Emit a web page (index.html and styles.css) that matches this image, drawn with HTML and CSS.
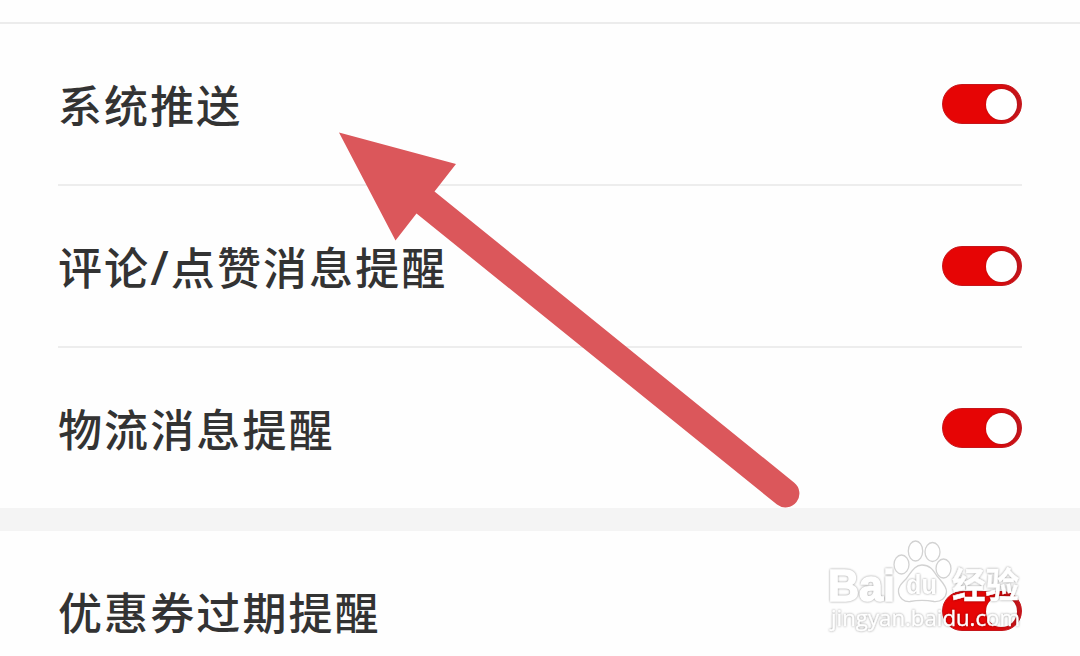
FILE: index.html
```html
<!DOCTYPE html>
<html lang="zh-CN">
<head>
<meta charset="UTF-8" />
<meta name="viewport" content="width=device-width, initial-scale=1.0" />
<title>消息推送设置</title>
<link rel="stylesheet" href="styles.css">
</head>
<body>
<div class="page">
  <header class="topbar"></header>

  <section class="group">
    <div class="row">
      <span class="label">系统推送</span>
      <span class="switch" role="switch" aria-checked="true"></span>
    </div>
    <div class="row">
      <span class="label">评论<span class="slash">/</span>点赞消息提醒</span>
      <span class="switch" role="switch" aria-checked="true"></span>
    </div>
    <div class="row">
      <span class="label">物流消息提醒</span>
      <span class="switch" role="switch" aria-checked="true"></span>
    </div>
  </section>

  <section class="group">
    <div class="row">
      <span class="label">优惠券过期提醒</span>
      <span class="switch" role="switch" aria-checked="true"></span>
    </div>
  </section>

  <!-- Pointer arrow -->
  <svg class="arrow" viewBox="0 0 1080 656">
    <path d="M339 132.5 L456 164 L434.500 191.500 L794 482.500 A13.900 13.900 0 0 1 777 504.500 L416.500 213.500 L395.500 240.500 Z" />
  </svg>

  <!-- Watermark -->
  <svg class="watermark" viewBox="820 530 210 110">
    <text class="wm-latin" x="828" y="601" textLength="67" lengthAdjust="spacingAndGlyphs">Bai</text>
    <g class="wm-paw">
      <ellipse cx="901.500" cy="564.500" rx="7.500" ry="9.500" />
      <ellipse cx="915.500" cy="551" rx="7.200" ry="10" />
      <ellipse cx="932.500" cy="552" rx="7.500" ry="9.500" />
      <ellipse cx="943.500" cy="568.500" rx="7.500" ry="9.500" />
      <path d="M922 565 C914 565 911 573 906 579 C901 584 898 587 898.500 592 C899 598 904 602 910 601.500 C918 600 926 600 934 601.500 C941 602 946 598 946.500 592 C947 586 941 581 937 576 C933 570 930 565 922 565 Z" />
    </g>
    <text class="wm-du" x="906" y="594" textLength="31" lengthAdjust="spacingAndGlyphs">du</text>
    <text class="wm-cjk" x="952" y="598" textLength="67" lengthAdjust="spacingAndGlyphs">经验</text>
    <text class="wm-url" x="831" y="626" textLength="189" lengthAdjust="spacingAndGlyphs">jingyan.baidu.com</text>
  </svg>
</div>
</body>
</html>
```
FILE: styles.css
```css
* { box-sizing: border-box; }
body { margin: 0; background: #fefefe; color: #333; font-family: "Noto Sans CJK SC", sans-serif; overflow: hidden; }
.page { position: relative; width: 1080px; height: 656px; overflow: hidden; }
.topbar { height: 24px; border-bottom: 2px solid #ececec; }
.group { padding: 0 58px; }
.group + .group { border-top: 23px solid #f4f4f4; margin: 0; }
.row { display: flex; align-items: center; justify-content: space-between; height: 160px; }
.row + .row { height: 162px; border-top: 2px solid #ededed; }
.label { font-size: 44px; line-height: 60px; letter-spacing: 2.1px; font-weight: 500; }
.slash { font-family: "Noto Sans", sans-serif; font-size: 48px; font-weight: 500; line-height: 0; }
.switch { width: 80px; height: 40px; padding: 4px; border-radius: 20px; background: linear-gradient(90deg, #e60505 60%, #c2151c); border: 1px solid #c6161b; display: flex; align-items: center; justify-content: flex-end; }
.switch::after { content: ""; width: 31px; height: 31px; border-radius: 50%; background: #fff; box-shadow: 0 0 2px rgba(110, 30, 30, 0.5); }
.arrow { position: absolute; left: 0; top: 0; width: 1080px; height: 656px; fill: #db575b; }
.watermark { position: absolute; left: 820px; top: 530px; width: 210px; height: 110px; }
.watermark text { fill: #fff; filter: drop-shadow(0 0 0.8px rgba(0, 0, 0, 0.4)); }
.wm-latin { font: bold 44px "Liberation Sans", sans-serif; stroke: #fff; stroke-width: 1.5px; }
.wm-paw { fill: #fff; stroke: #d2d2d2; stroke-width: 1.3px; }
.wm-du { font: bold 27px "Liberation Sans", sans-serif; }
.wm-cjk { font: bold 35px "Noto Sans CJK SC", sans-serif; stroke: #fff; stroke-width: 0.5px; }
.wm-url { font: 22px "Open Sans", sans-serif; stroke: #fff; stroke-width: 0.4px; }
```
